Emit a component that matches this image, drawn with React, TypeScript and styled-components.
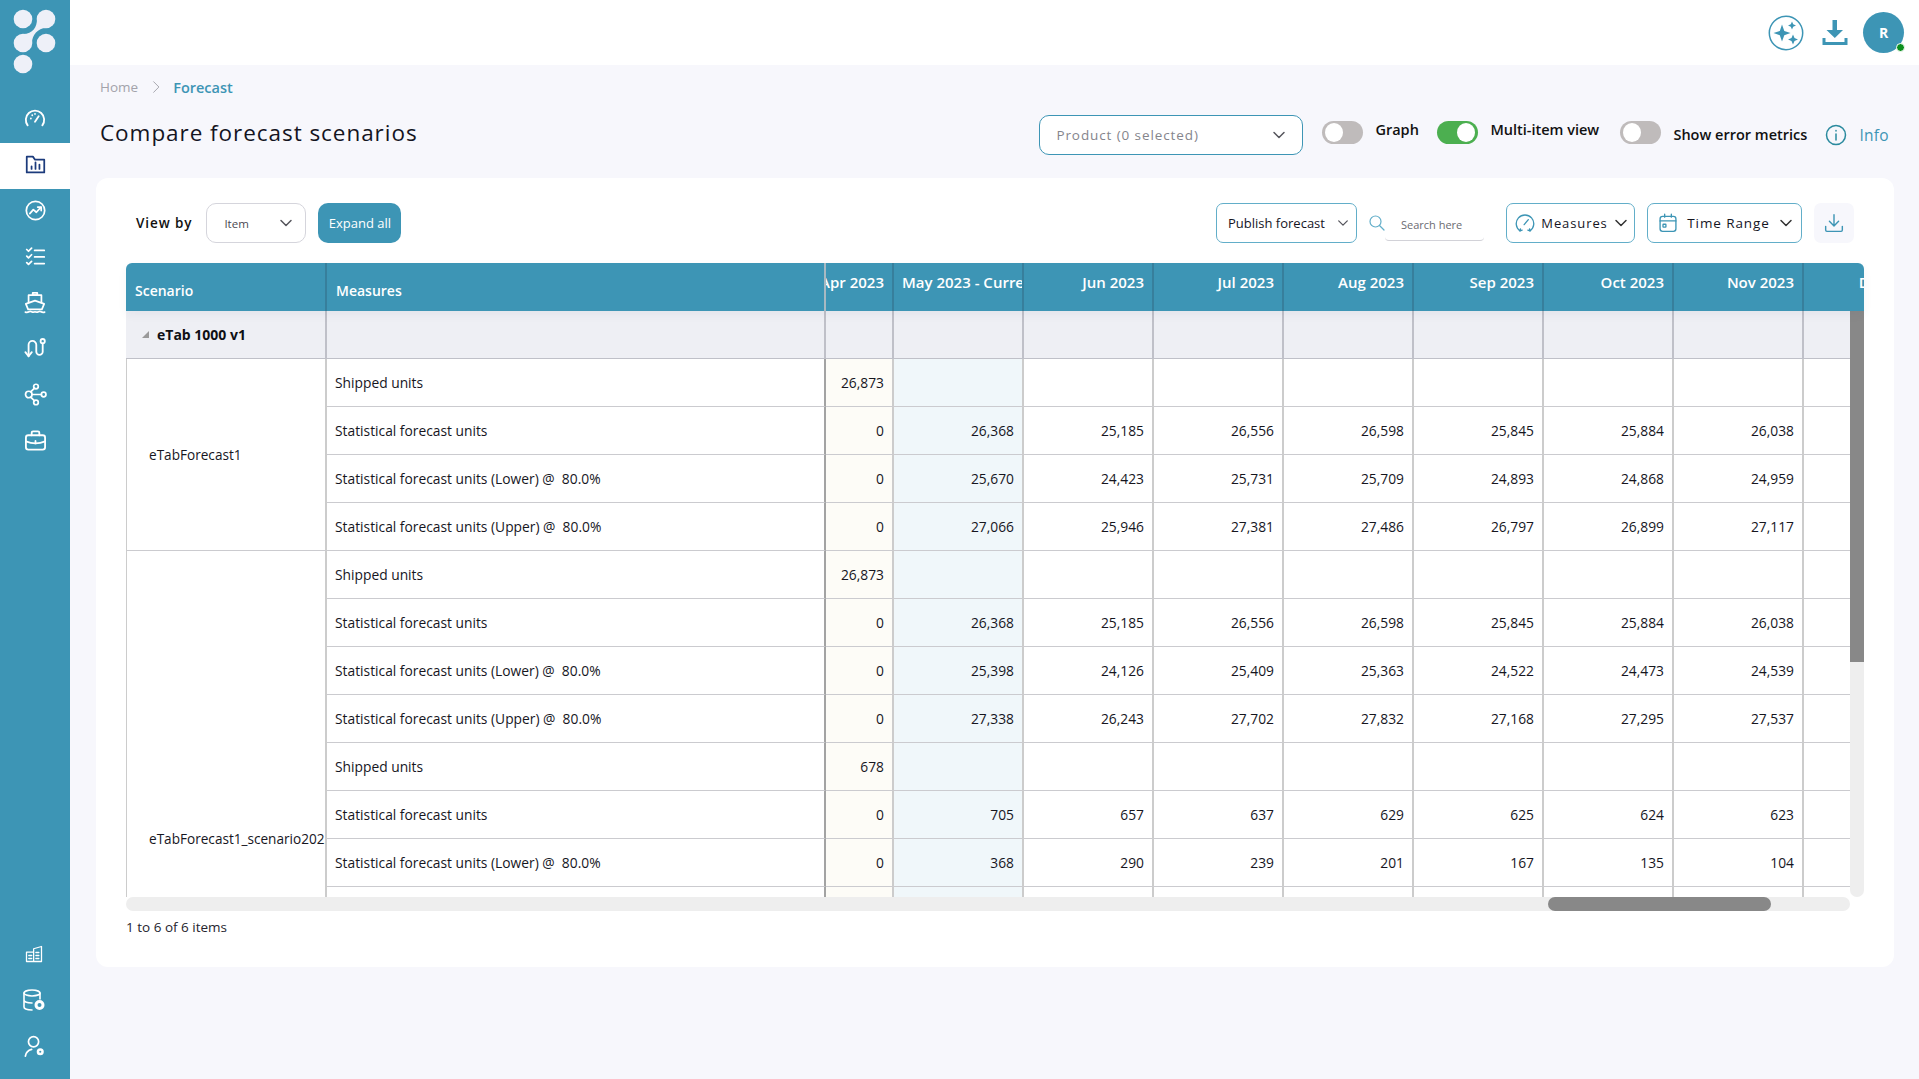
import React from "react";
import styled, { createGlobalStyle } from "styled-components";

const TEAL = "#3d95b5";
const INK = "#1a1a24";

const Global = createGlobalStyle`
  html, body { margin: 0; padding: 0; height: 100%; overflow: hidden; background: #f7f7fc; }
  body { font-family: "Open Sans", "Noto Sans", sans-serif; color: ${INK}; }
  * { box-sizing: border-box; }
`;

const Shell = styled.div`display: flex; height: 1079px;`;
const Sidebar = styled.aside`width: 70px; flex: none; background: ${TEAL}; display: flex; flex-direction: column; padding-bottom: 8px;`;
const LogoBox = styled.div`height: 97px; flex: none;`;
const NavItem = styled.div<{ $active?: boolean; $nudge?: number }>`
  height: 46px; display: flex; align-items: center; justify-content: center;
  padding: 0 ${p => p.$nudge ?? 0}px 4px 0;
  background: ${p => (p.$active ? "#fff" : "transparent")};
  color: ${p => (p.$active ? "#1c3b7c" : "#fff")};
`;
const NavSpacer = styled.div`flex: 1;`;
const Main = styled.div`flex: 1; min-width: 0; display: flex; flex-direction: column;`;
const TopBar = styled.header`height: 65px; flex: none; background: #fff; display: flex; align-items: center; justify-content: flex-end; padding-right: 15px; color: ${TEAL};`;
const TopIcon = styled.div<{ $mr: number }>`display: flex; margin-right: ${p => p.$mr}px;`;
const Avatar = styled.div`
  width: 41px; height: 41px; border-radius: 50%; background: ${TEAL}; color: #fff; font-size: 14px; font-weight: 700;
  display: flex; align-items: center; justify-content: center; position: relative;
`;
const Presence = styled.span`position: absolute; right: -1px; bottom: 1px; width: 9px; height: 9px; border-radius: 50%; background: #0b8f1d; border: 1px solid #fff;`;
const Content = styled.main`flex: 1; padding: 12px 25px 0 26px;`;
const Crumbs = styled.nav`height: 20px; display: flex; align-items: center; padding-left: 4px; font-size: 13.5px; color: #a3a3ab;`;
const CrumbSep = styled.span`display: flex; margin: 0 10px 0 11px; color: #9a9aa2;`;
const CrumbNow = styled.span`color: ${TEAL}; font-weight: 600; font-size: 14.5px;`;
const HeadRow = styled.div`height: 40px; margin-top: 18px; display: flex; align-items: center; justify-content: space-between; padding: 0 5px 0 4px;`;
const Title = styled.h1`margin: 0; font-size: 22.5px; font-weight: 400; letter-spacing: 0.95px; color: #14141f; position: relative; top: -3px;`;
const Controls = styled.div`display: flex; align-items: center;`;
const ProductSelect = styled.div`
  width: 264px; height: 40px; margin-right: 19px; padding: 0 16px; border: 1px solid ${TEAL}; border-radius: 10px; background: #fff;
  display: flex; align-items: center; justify-content: space-between; font-size: 13.5px; letter-spacing: 0.9px; color: #85858c;
`;
const ToggleItem = styled.div<{ $w: number }>`width: ${p => p.$w}px; display: flex; align-items: flex-start; height: 40px; padding-top: 6px;`;
const ToggleTrack = styled.div<{ $on?: boolean }>`
  width: 41px; height: 23px; flex: none; border-radius: 12px; padding: 2px 3px; display: flex;
  justify-content: ${p => (p.$on ? "flex-end" : "flex-start")}; background: ${p => (p.$on ? "#4caf50" : "#bfbbbb")};
`;
const Knob = styled.span`width: 18px; height: 19px; border-radius: 50%; background: #fff;`;
const ToggleLabel = styled.span<{ $low?: boolean }>`
  margin-left: 12px; font-size: 14.5px; font-weight: 600; color: #111; white-space: nowrap; line-height: 18px; margin-top: ${p => (p.$low ? 5 : 0)}px;
`;
const InfoLink = styled.div`display: flex; align-items: center; gap: 12px; font-size: 15.5px; color: ${TEAL}; letter-spacing: .3px;`;
const Card = styled.section`margin-top: 23px; height: 789px; background: #fff; border-radius: 12px; padding: 25px 30px 0;`;
const Toolbar = styled.div`height: 40px; padding: 0 10px; display: flex; align-items: center; justify-content: space-between;`;
const ToolGroup = styled.div`display: flex; align-items: center;`;
const ViewBy = styled.span`font-size: 13.5px; font-weight: 600; letter-spacing: .9px; color: #111; margin-right: 14px; white-space: nowrap;`;
const ItemSelect = styled.div`
  width: 100px; height: 40px; border: 1px solid #d5d5dc; border-radius: 10px; padding: 0 12px 0 17px; display: flex; align-items: center;
  justify-content: space-between; font-size: 11.5px; color: #4a4a52; margin-right: 12px;
`;
const ExpandButton = styled.button`
  width: 83px; height: 40px; border: 0; border-radius: 10px; background: ${TEAL}; color: #fff; font: 500 13px "Open Sans", sans-serif; padding: 0; white-space: nowrap;
`;
const DropButton = styled.div<{ $w: number; $mr: number; $pl: number; $pr: number }>`
  width: ${p => p.$w}px; height: 40px; margin-right: ${p => p.$mr}px; padding: 0 ${p => p.$pr}px 0 ${p => p.$pl}px; flex: none; border: 1px solid #62aec9; border-radius: 7px;
  display: flex; align-items: center; justify-content: space-between; font-size: 13px; color: #15151f; white-space: nowrap;
`;
const SpacedLabel = styled.span<{ $size: number }>`letter-spacing: .9px; font-size: ${p => p.$size}px; margin-right: 4px;`;
const ButtonIcon = styled.span`display: flex; color: ${TEAL}; margin-right: 4px;`;
const SearchWrap = styled.div`display: flex; align-items: center; margin-right: 22px; color: #62aec9;`;
const SearchField = styled.div`width: 99px; height: 27px; margin-top: 8px; border-bottom: 1px solid #d2d2d8; border-radius: 0 0 4px 4px; font-size: 11px; color: #6b6b72; padding: 3px 0 0 16px; white-space: nowrap;`;
const IconSquare = styled.div`width: 40px; height: 40px; border-radius: 7px; background: #f7f7fc; color: ${TEAL}; display: flex; align-items: center; justify-content: center;`;

const TableFrame = styled.div`margin-top: 20px; width: 1738px;`;
const HeaderRow = styled.div`height: 48px; background: ${TEAL}; border-radius: 6px 6px 0 0; display: flex; overflow: hidden; color: #fff; font-weight: 600; position: relative; z-index: 1; box-shadow: 0 4px 10px rgba(40,60,90,.05);`;
const HeadCell = styled.div<{ $w: number; $align?: "left" | "right"; $frozen?: boolean; $light?: boolean }>`
  width: ${p => p.$w}px; flex: none; height: 48px; padding: ${p => (p.$frozen ? "18px 9px 0" : "10px 8px 0 8px")}; overflow: hidden; white-space: nowrap;
  font-size: ${p => (p.$frozen ? 14 : 15)}px;
  display: flex; justify-content: ${p => (p.$align === "left" ? "flex-start" : "flex-end")};
  border-right: 2px solid ${p => (p.$light ? "#a8b9c2" : "#377f9c")}; line-height: 19px;
`;
const BodyRow = styled.div`display: flex; height: 586px;`;
const BodyClip = styled.div`width: 1724px; height: 586px; overflow: hidden;`;
const Grid = styled.table`border-collapse: separate; border-spacing: 0; table-layout: fixed; width: 1808px; font-size: 13.8px;`;
const Cell = styled.td<{ $bg?: string; $right?: boolean; $edge?: boolean }>`
  height: 48px; padding: 0 8px; white-space: nowrap; overflow: hidden; vertical-align: middle; color: #16161e;
  text-align: ${p => (p.$right ? "right" : "left")}; background: ${p => p.$bg ?? "#fff"};
  border-right: 2px solid ${p => (p.$edge ? "#a3a3a3" : "#cccccc")}; border-bottom: 1.5px solid #cbcbcf;
`;
const GroupCell = styled(Cell)`background: #eeeff4; border-color: #bfc0c8; font-weight: 700; color: #0f0f14;`;
const GroupInner = styled.span`display: flex; align-items: center; gap: 8px; padding-left: 8px; font-size: 14px;`;
const ScenarioCell = styled(Cell)`padding-left: 22px; padding-right: 0; border-left: 1px solid #cccccc; font-size: 13.6px;`;
const Caret = styled.span`width: 0; height: 0; border-style: solid; border-width: 0 0 7px 7px; border-color: transparent transparent #9a9a9a transparent;`;
const VTrack = styled.div`width: 14px; height: 586px; flex: none; background: #eeeeee; border-radius: 0 0 7px 7px;`;
const VThumb = styled.div`width: 14px; height: 351px; background: #888;`;
const HTrack = styled.div`width: 1724px; height: 14px; background: #eeeeee; border-radius: 7px; display: flex;`;
const HThumb = styled.div`width: 223px; height: 14px; margin-left: 1422px; background: #888; border-radius: 7px;`;
const Footer = styled.div`margin-top: 7px; font-size: 13.5px; line-height: 18px; color: #25252e;`;

type SvgProps = { children: React.ReactNode; w?: number; h?: number; vb?: string; sw?: number };
const Ic = ({ children, w = 22, h = 22, vb = "0 0 24 24", sw = 2 }: SvgProps) => (
  <svg width={w} height={h} viewBox={vb} fill="none" stroke="currentColor" strokeWidth={sw} strokeLinecap="round" strokeLinejoin="round">{children}</svg>
);
const Chevron = ({ size = 14, color = "#55555c" }: { size?: number; color?: string }) => (
  <svg width={size} height={size} viewBox="0 0 14 14" fill="none" stroke={color} strokeWidth="1.5" strokeLinecap="round" strokeLinejoin="round"><path d="M2 4.5 7 9.5l5-5" /></svg>
);
const Logo = () => (
  <svg width="70" height="76" viewBox="0 0 70 76" fill="#eef0f8">
    <circle cx="23" cy="19" r="9.3" /><circle cx="46" cy="19" r="9.3" /><circle cx="23" cy="43" r="9.3" /><circle cx="46" cy="43" r="9.3" /><circle cx="23" cy="64" r="9.3" />
    <path d="M37 19C37 27 33 34 23 34L32 43C32 35 38 28 46 28Z" />
  </svg>
);
const Gauge = () => <Ic w={22} h={22}><path d="M4 20a10 10 0 1 1 16 0" /><path d="M12 16l4-6" /><path d="M7.5 12.5h.01M12 7.5h.01M9 9h.01" /></Ic>;
const FolderChart = () => <Ic w={21} h={21}><path d="M2 3h7l2.5 3.5H22V21H2Z" /><path d="M7.5 17v-3M12 17V9.5M16.5 17v-5" /></Ic>;
const Trend = () => <Ic w={21} h={21}><circle cx="12" cy="12" r="10.5" /><path d="M5.5 15.5 9.5 11l3.5 3 5-5.5" /><path d="M14.5 8H18.5V12" /></Ic>;
const Checklist = () => <Ic w={21} h={21}><path d="M2 4l2 2 3.5-3.5M2 11.5l2 2 3.5-3.5M2 19l2 2 3.5-3.5" /><path d="M11 5h11M11 12.5h11M11 20h11" /></Ic>;
const ShipIc = () => <Ic w={22} h={23} sw={1.9}><path d="M9.500 1.500h5v2.500h-5Z" /><path d="M5 12V4h14v8" /><path d="M2 13.500 12 10l10 3.500-2.500 6h-15Z" /><path d="M1.500 22.500c3 1 4-.8 5.300-.8s2.700 1.800 5.200.5c2.500 1.300 3.900-.5 5.200-.5s2.300 1.800 5.300.8" /></Ic>;
const RouteIc = () => <Ic w={22} h={22}><path d="M5 21V8.500a4.200 4.200 0 0 1 8.400 0V16a3.500 3.500 0 0 0 7 0V8" /><path d="M1.500 16.500 5 21l3.500-4.500" /><circle cx="20.400" cy="4.500" r="2.300" /></Ic>;
const Net = () => <Ic w={23} h={23} sw={1.8}><circle cx="5" cy="12" r="3.400" /><circle cx="12.500" cy="3.700" r="2.400" /><circle cx="12.500" cy="20.300" r="2.400" /><circle cx="20.500" cy="12" r="2.400" /><path d="M8.400 12h9.700M7 9.300l4-4M7 14.700l4 4" /></Ic>;
const Brief = () => <Ic w={23} h={23} sw={1.9}><rect x="2" y="6.500" width="20" height="15" rx="2.500" /><path d="M8 6.500V4a1.500 1.500 0 0 1 1.500-1.500h5A1.500 1.500 0 0 1 16 4v2.500" /><path d="M2 13c6 2.500 14 2.500 20 0" /><path d="M12 12.500v2.500" /></Ic>;
const Buildings = () => <Ic w={18} h={18} sw={1.7}><path d="M2 9.500h9.500V22H2ZM11.500 22V5l10.500-3v20Z" /><path d="M5 14h4M5 18h4M14.500 10h4M14.500 14h4M14.500 18h4" /></Ic>;
const DbGear = () => <Ic w={24} h={24} sw={1.6}><ellipse cx="10" cy="5" rx="8" ry="3" /><path d="M2 5v14c0 1.700 3.600 3 8 3M2 12c0 1.700 3.600 3 8 3M18 5v6" /><circle cx="17.500" cy="17" r="3.500" strokeWidth="3" /></Ic>;
const UserGear = () => <Ic w={23} h={23} sw={1.8}><circle cx="11" cy="7" r="5.300" /><path d="M2.500 22c.5-3.500 2.800-6 6.500-7" /><circle cx="18" cy="17.500" r="2.400" strokeWidth="2.600" /></Ic>;
const Sparkle = () => (
  <svg width="36" height="36" viewBox="0 0 36 36"><circle cx="18" cy="18" r="16.700" fill="none" stroke={TEAL} strokeWidth="1.500" />
    <g fill={TEAL}><path d="M14 9.500 16.300 16 22.500 18 16.300 20.200 14 26.500 11.800 20.200 5.500 18 11.800 16Z" /><path d="M24 6.500l1.200 2.800L28 10.500l-2.800 1.200L24 14.500l-1.200-2.800L20 10.500l2.800-1.200Z" /><path d="M25 19.500l1.500 3.500 3.500 1.500-3.500 1.500-1.500 3.500-1.500-3.500-3.500-1.500 3.500-1.500Z" /></g></svg>
);
const BoldDownload = () => (
  <svg width="28" height="26" viewBox="0 0 28 26" fill={TEAL}><path d="M11.500 0h4.500v10h6L13.800 18 5.500 10h6Z" /><path d="M1.500 18h3v4h19v-4h3v7h-25Z" /></svg>
);
const Info = () => <svg width="22" height="22" viewBox="0 0 22 22" fill="none" stroke="#2a8a9e" strokeWidth="1.500" strokeLinecap="round"><circle cx="11" cy="11" r="9.500" /><path d="M11 10v6M11 6.500v.5" /></svg>;
const Search = () => <svg width="16" height="16" viewBox="0 0 16 16" fill="none" stroke="currentColor" strokeWidth="1.200" strokeLinecap="round"><circle cx="6.500" cy="6.500" r="5.500" /><path d="M10.500 10.500 15 15" /></svg>;
const Gauge2 = () => <Ic w={20} h={20} sw={1.600}><path d="M6 21.500A10.500 10.500 0 1 1 18 21.500" /><path d="M11 14l5-6" /><path d="M8.500 20.500l-2.500 1 .5-2.500M15.500 20.500l2.500 1-.5-2.500" /></Ic>;
const Calendar = () => <Ic w={20} h={20} sw={1.600}><rect x="2.500" y="4" width="19" height="18" rx="3" /><path d="M2.500 9.500h19M8 1.500V5M16 1.500V5" /><rect x="6" y="13.500" width="3.500" height="3.500" rx=".5" /></Ic>;
const ThinDownload = () => <Ic w={20} h={20} sw={1.700}><path d="M12 2v13M6.500 10l5.500 5.500 5.500-5.500" /><path d="M2 16v4.500A1.500 1.500 0 0 0 3.500 22h17a1.500 1.500 0 0 0 1.500-1.500V16" /></Ic>;

type RowData = { label: string; vals: string[] };
const shipped = (v: string): RowData => ({ label: "Shipped units", vals: [v, "", "", "", "", "", "", "", ""] });
const stat = (...v: string[]): RowData => ({ label: "Statistical forecast units", vals: [...v, ""] });
const lower = (...v: string[]): RowData => ({ label: "Statistical forecast units (Lower) @\u00a0 80.0%", vals: [...v, ""] });
const upper = (...v: string[]): RowData => ({ label: "Statistical forecast units (Upper) @\u00a0 80.0%", vals: [...v, ""] });
const blank = (label: string): RowData => ({ label, vals: ["", "", "", "", "", "", "", "", ""] });

const statA = stat("0", "26,368", "25,185", "26,556", "26,598", "25,845", "25,884", "26,038");
const first: RowData[] = [
  shipped("26,873"),
  statA,
  lower("0", "25,670", "24,423", "25,731", "25,709", "24,893", "24,868", "24,959"),
  upper("0", "27,066", "25,946", "27,381", "27,486", "26,797", "26,899", "27,117"),
];
const second: RowData[] = [
  shipped("26,873"),
  statA,
  lower("0", "25,398", "24,126", "25,409", "25,363", "24,522", "24,473", "24,539"),
  upper("0", "27,338", "26,243", "27,702", "27,832", "27,168", "27,295", "27,537"),
  shipped("678"),
  stat("0", "705", "657", "637", "629", "625", "624", "623"),
  lower("0", "368", "290", "239", "201", "167", "135", "104"),
  blank(""),
  blank(""), blank(""), blank(""), blank(""),
];
const months = ["Apr 2023", "May 2023 - Current", "Jun 2023", "Jul 2023", "Aug 2023", "Sep 2023", "Oct 2023", "Nov 2023", "Dec 2023"];
const widths = [201, 499, 68, 130, 130, 130, 130, 130, 130, 130, 130, 130];

const Rows = ({ rows, name }: { rows: RowData[]; name: string }) => (
  <>
    {rows.map((r, i) => (
      <tr key={i}>
        {i === 0 && <ScenarioCell rowSpan={rows.length}>{name}</ScenarioCell>}
        <Cell $edge>{r.label}</Cell>
        {r.vals.map((v, j) => (
          <Cell key={j} $right $bg={j === 0 ? "#fdfcf7" : j === 1 ? "#f0f7fa" : undefined}>{v}</Cell>
        ))}
      </tr>
    ))}
  </>
);

export default function App() {
  return (
    <Shell>
      <Global />
      <Sidebar>
        <LogoBox><Logo /></LogoBox>
        <NavItem><Gauge /></NavItem>
        <NavItem $active><FolderChart /></NavItem>
        <NavItem><Trend /></NavItem>
        <NavItem><Checklist /></NavItem>
        <NavItem><ShipIc /></NavItem>
        <NavItem><RouteIc /></NavItem>
        <NavItem><Net /></NavItem>
        <NavItem><Brief /></NavItem>
        <NavSpacer />
        <NavItem $nudge={3}><Buildings /></NavItem>
        <NavItem $nudge={2}><DbGear /></NavItem>
        <NavItem $nudge={1}><UserGear /></NavItem>
      </Sidebar>
      <Main>
        <TopBar>
          <TopIcon $mr={17}><Sparkle /></TopIcon>
          <TopIcon $mr={14}><BoldDownload /></TopIcon>
          <Avatar>R<Presence /></Avatar>
        </TopBar>
        <Content>
          <Crumbs>
            Home
            <CrumbSep><Ic w={14} h={14} sw={1.500}><path d="M8 3l9 9-9 9" /></Ic></CrumbSep>
            <CrumbNow>Forecast</CrumbNow>
          </Crumbs>
          <HeadRow>
            <Title>Compare forecast scenarios</Title>
            <Controls>
              <ProductSelect>Product (0 selected)<Chevron /></ProductSelect>
              <ToggleItem $w={115}><ToggleTrack><Knob /></ToggleTrack><ToggleLabel>Graph</ToggleLabel></ToggleItem>
              <ToggleItem $w={183}><ToggleTrack $on><Knob /></ToggleTrack><ToggleLabel>Multi-item view</ToggleLabel></ToggleItem>
              <ToggleItem $w={205}><ToggleTrack><Knob /></ToggleTrack><ToggleLabel $low>Show error metrics</ToggleLabel></ToggleItem>
              <InfoLink><Info />Info</InfoLink>
            </Controls>
          </HeadRow>
          <Card>
            <Toolbar>
              <ToolGroup>
                <ViewBy>View by</ViewBy>
                <ItemSelect>Item<Chevron /></ItemSelect>
                <ExpandButton>Expand all</ExpandButton>
              </ToolGroup>
              <ToolGroup>
                <DropButton $w={141} $mr={12} $pl={11} $pr={7}>Publish forecast<Chevron size={12} /></DropButton>
                <SearchWrap><Search /><SearchField>Search here</SearchField></SearchWrap>
                <DropButton $w={129} $mr={12} $pl={8} $pr={6}><ButtonIcon><Gauge2 /></ButtonIcon><SpacedLabel $size={13}>Measures</SpacedLabel><Chevron color="#333" /></DropButton>
                <DropButton $w={155} $mr={12} $pl={10} $pr={8}><ButtonIcon><Calendar /></ButtonIcon><SpacedLabel $size={13.5}>Time Range</SpacedLabel><Chevron color="#333" /></DropButton>
                <IconSquare><ThinDownload /></IconSquare>
              </ToolGroup>
            </Toolbar>
            <TableFrame>
              <HeaderRow>
                <HeadCell $w={201} $frozen $align="left">Scenario</HeadCell>
                <HeadCell $w={499} $frozen $align="left" $light>Measures</HeadCell>
                {months.map((m, i) => (
                  <HeadCell key={m} $w={i === 0 ? 68 : 130} $align={i === 1 ? "left" : "right"}>{m}</HeadCell>
                ))}
              </HeaderRow>
              <BodyRow>
                <BodyClip>
                  <Grid>
                    <colgroup>{widths.map((w, i) => <col key={i} style={{ width: w }} />)}</colgroup>
                    <tbody>
                      <tr>
                        <GroupCell><GroupInner><Caret />eTab 1000 v1</GroupInner></GroupCell>
                        <GroupCell />
                        {months.map(m => <GroupCell key={m} />)}
                      </tr>
                      <Rows rows={first} name="eTabForecast1" />
                      <Rows rows={second} name="eTabForecast1_scenario2025" />
                    </tbody>
                  </Grid>
                </BodyClip>
                <VTrack><VThumb /></VTrack>
              </BodyRow>
              <HTrack><HThumb /></HTrack>
              <Footer>1 to 6 of 6 items</Footer>
            </TableFrame>
          </Card>
        </Content>
      </Main>
    </Shell>
  );
}
